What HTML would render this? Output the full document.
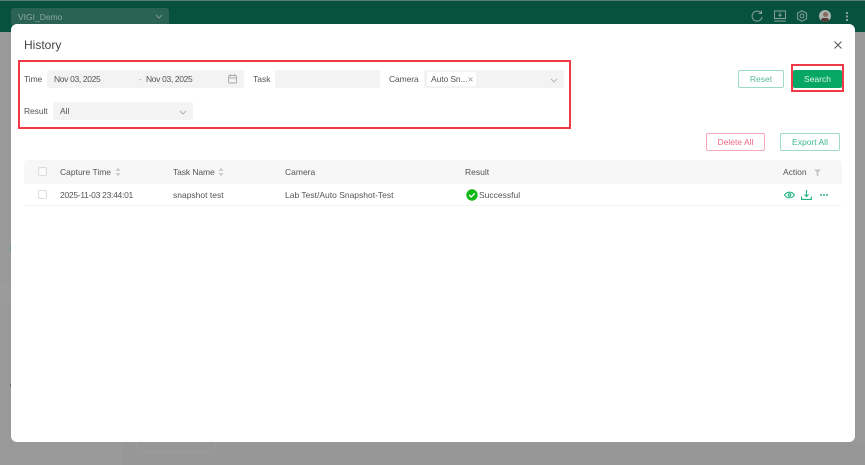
<!DOCTYPE html>
<html><head><meta charset="utf-8">
<style>
*{box-sizing:border-box}
html,body{margin:0;padding:0}
body{width:865px;height:465px;overflow:hidden;position:relative;background:#999;font-family:"Liberation Sans",sans-serif;color:#555;font-size:8.5px}
#w{position:absolute;left:0;top:0;width:865px;height:465px;filter:blur(.3px)}
.a{position:absolute;white-space:nowrap}
.f{background:#f3f3f3;border-radius:2px;height:18px}
.t{line-height:12px}
.b{border-radius:2px;text-align:center}
svg{position:absolute;overflow:visible}
</style></head>
<body><div id="w">
<div class="a" style="left:0;top:0;width:865px;height:32px;background:#07513f"></div>
<div class="a" style="left:0;top:0;width:865px;height:1px;background:#5a7d74"></div>
<div class="a" style="left:0;top:32px;width:865px;height:433px;background:#999"></div>
<div class="a" style="left:0;top:282px;width:11px;height:22px;background:#9b9b9b"></div>
<div class="a" style="left:122px;top:442px;width:743px;height:23px;background:#979797"></div>
<div class="a" style="left:136px;top:442px;width:80px;height:10px;border:1px solid #9b9b9b;border-top:0;border-radius:0 0 2px 2px"></div>
<div class="a" style="left:10px;top:246px;width:1px;height:5px;background:#5f9c8b"></div>
<div class="a" style="left:10px;top:384px;width:1px;height:3px;background:#6f6f6f"></div>
<div class="a" style="left:11px;top:8px;width:158px;height:18px;background:#2a6353;border-radius:3px"></div>
<div class="a t" style="left:18px;top:11px;color:#8fa9a2;font-size:8.5px">VIGI_Demo</div>
<svg style="left:155px;top:14px" width="8" height="6"><path d="M1 1l3 3 3-3" fill="none" stroke="#7d9c94" stroke-width=".9"/></svg>

<svg style="left:750px;top:9px" width="14" height="14" viewBox="0 0 14 14" fill="none" stroke="#88a399" stroke-width="1"><path d="M11 4A5 5 0 1 0 12 8M11.500 1.500V4.500H8.500"/></svg>
<svg style="left:774px;top:10px" width="12" height="12" viewBox="0 0 12 12" fill="none" stroke="#88a399" stroke-width="1"><rect x=".5" y="1" width="11" height="7.500"/><path d="M0 11H12M6 2.500V6M4.500 4.800L6 6.300 7.500 4.800"/></svg>
<svg style="left:796px;top:10px" width="12" height="12" viewBox="0 0 12 12" fill="none" stroke="#88a399" stroke-width="1"><path d="M6 .7L10.600 3.300V8.700L6 11.300 1.400 8.700V3.300Z"/><circle cx="6" cy="6" r="2"/></svg>
<div class="a" style="left:819px;top:10px;width:12px;height:12px;border-radius:50%;background:#a9b4ae;overflow:hidden"><div style="position:absolute;left:3.500px;top:2px;width:5px;height:5px;border-radius:50%;background:#8a6a5c"></div><div style="position:absolute;left:2px;top:8px;width:8px;height:5px;border-radius:3px;background:#4f3a35"></div></div>
<div class="a" style="left:846px;top:12px;width:1.500px;height:1.500px;background:#88a399;box-shadow:0 3.500px #88a399,0 7px #88a399"></div>

<div class="a" style="left:11px;top:24px;width:844px;height:418px;background:#fff;border-radius:6px"></div>
<div class="a" style="left:24px;top:37px;font-size:12px;line-height:16px;color:#444">History</div>
<svg style="left:834px;top:41px" width="8" height="8" viewBox="0 0 8 8"><path d="M.5 .5l7 7M7.500 .5l-7 7" stroke="#555" stroke-width="1"/></svg>

<div class="a" style="left:18px;top:60px;width:553px;height:69px;border:2px solid #ee3b47"></div>
<div class="a t" style="left:24px;top:73px;letter-spacing:-.1px">Time</div>
<div class="a f" style="left:47px;top:70px;width:197px"></div>
<div class="a t" style="left:54px;top:73px;letter-spacing:-.35px">Nov 03, 2025</div>
<div class="a t" style="left:139px;top:73px;color:#999">-</div>
<div class="a t" style="left:146px;top:73px;letter-spacing:-.35px">Nov 03, 2025</div>
<svg style="left:228px;top:74px" width="10" height="10" viewBox="0 0 10 10" fill="none" stroke="#aaa" stroke-width=".9"><rect x=".5" y="1.500" width="8" height="7.500" rx="1"/><path d="M.5 4H8.500M2.500 0V2.500M6.500 0V2.500"/></svg>
<div class="a t" style="left:253px;top:73px">Task</div>
<div class="a f" style="left:275px;top:70px;width:105px"></div>
<div class="a t" style="left:389px;top:73px;letter-spacing:-.1px">Camera</div>
<div class="a f" style="left:424px;top:70px;width:140px"></div>
<div class="a" style="left:427px;top:72px;width:49px;height:14px;background:#fff;border-radius:2px"></div>
<div class="a t" style="left:431px;top:73px;letter-spacing:-.1px">Auto Sn...</div>
<svg style="left:468px;top:77px" width="5" height="5" viewBox="0 0 5 5"><path d="M.5 .5l4 4M4.500 .5l-4 4" stroke="#999" stroke-width=".8"/></svg>
<svg style="left:550px;top:78px" width="8" height="5"><path d="M1 1l3 3 3-3" fill="none" stroke="#b5b5b5" stroke-width=".9"/></svg>
<div class="a t" style="left:24px;top:105px;letter-spacing:-.1px">Result</div>
<div class="a f" style="left:53px;top:102px;width:140px"></div>
<div class="a t" style="left:60px;top:105px">All</div>
<svg style="left:179px;top:110px" width="8" height="5"><path d="M1 1l3 3 3-3" fill="none" stroke="#aaa" stroke-width=".9"/></svg>

<div class="a b t" style="left:738px;top:70px;width:46px;height:18px;border:1px solid #9fdcc5;color:#5dbb97;line-height:16px">Reset</div>
<div class="a" style="left:791px;top:64px;width:53px;height:28px;border:2px solid #ee3b47"></div>
<div class="a b t" style="left:793px;top:70px;width:49px;height:18px;background:#06a765;color:#e0f5ec;line-height:18px">Search</div>
<div class="a b t" style="left:706px;top:133px;width:59px;height:18px;border:1px solid #f7a9b7;color:#ef6a83;line-height:16px">Delete All</div>
<div class="a b t" style="left:780px;top:133px;width:60px;height:18px;border:1px solid #9fdcc5;color:#3fb78b;line-height:16px">Export All</div>

<div class="a" style="left:24px;top:160px;width:818px;height:24px;background:#f7f7f7;border-radius:4px 4px 0 0"></div>
<div class="a" style="left:24px;top:205px;width:818px;height:1px;background:#f3f3f3"></div>
<div class="a" style="left:38px;top:167px;width:9px;height:9px;border:1px solid #dcdcdc;border-radius:2px;background:#fafafa"></div>
<div class="a" style="left:38px;top:190px;width:9px;height:9px;border:1px solid #dcdcdc;border-radius:2px;background:#fff"></div>
<div class="a t" style="left:60px;top:166px">Capture Time</div>
<svg style="left:115px;top:167px" width="6" height="10" viewBox="0 0 6 10" fill="#ccc"><path d="M3 .5L5.500 4H.5ZM3 9.500L.5 6H5.500Z"/></svg>
<div class="a t" style="left:173px;top:166px;letter-spacing:-.1px">Task Name</div>
<svg style="left:218px;top:167px" width="6" height="10" viewBox="0 0 6 10" fill="#ccc"><path d="M3 .5L5.500 4H.5ZM3 9.500L.5 6H5.500Z"/></svg>
<div class="a t" style="left:285px;top:166px">Camera</div>
<div class="a t" style="left:465px;top:166px">Result</div>
<div class="a t" style="left:783px;top:166px">Action</div>
<svg style="left:814px;top:169px" width="7" height="7" viewBox="0 0 7 7" fill="#c4c4c4"><path d="M0 .5H7L4.300 3.500V7H2.700V3.500Z"/></svg>
<div class="a t" style="left:60px;top:189px;letter-spacing:-.28px">2025-11-03 23:44:01</div>
<div class="a t" style="left:173px;top:189px">snapshot test</div>
<div class="a t" style="left:285px;top:189px">Lab Test/Auto Snapshot-Test</div>
<svg style="left:466px;top:189px" width="12" height="12" viewBox="0 0 12 12"><circle cx="6" cy="6" r="5.700" fill="#10b915"/><path d="M3.200 6L5.200 8 8.800 4.300" fill="none" stroke="#fff" stroke-width="1.300"/></svg>
<div class="a t" style="left:479px;top:189px">Successful</div>
<svg style="left:784px;top:191px" width="11" height="8" viewBox="0 0 11 8" fill="none" stroke="#22b384" stroke-width="1.100"><path d="M.5 4C3 .2 8 .2 10.500 4 8 7.800 3 7.800 .5 4Z"/><circle cx="5.500" cy="4" r="1.300"/></svg>
<svg style="left:801px;top:190px" width="11" height="10" viewBox="0 0 11 10" fill="none" stroke="#22b384" stroke-width="1.100"><path d="M5.500 0V6M3.500 4.500L5.500 6.500 7.500 4.500M.6 6.500V9.400H10.400V6.500"/></svg>
<div class="a" style="left:820px;top:194px;width:1.500px;height:1.500px;background:#6cc9ab;box-shadow:3px 0 #6cc9ab,6px 0 #6cc9ab"></div>
</div></body></html>
